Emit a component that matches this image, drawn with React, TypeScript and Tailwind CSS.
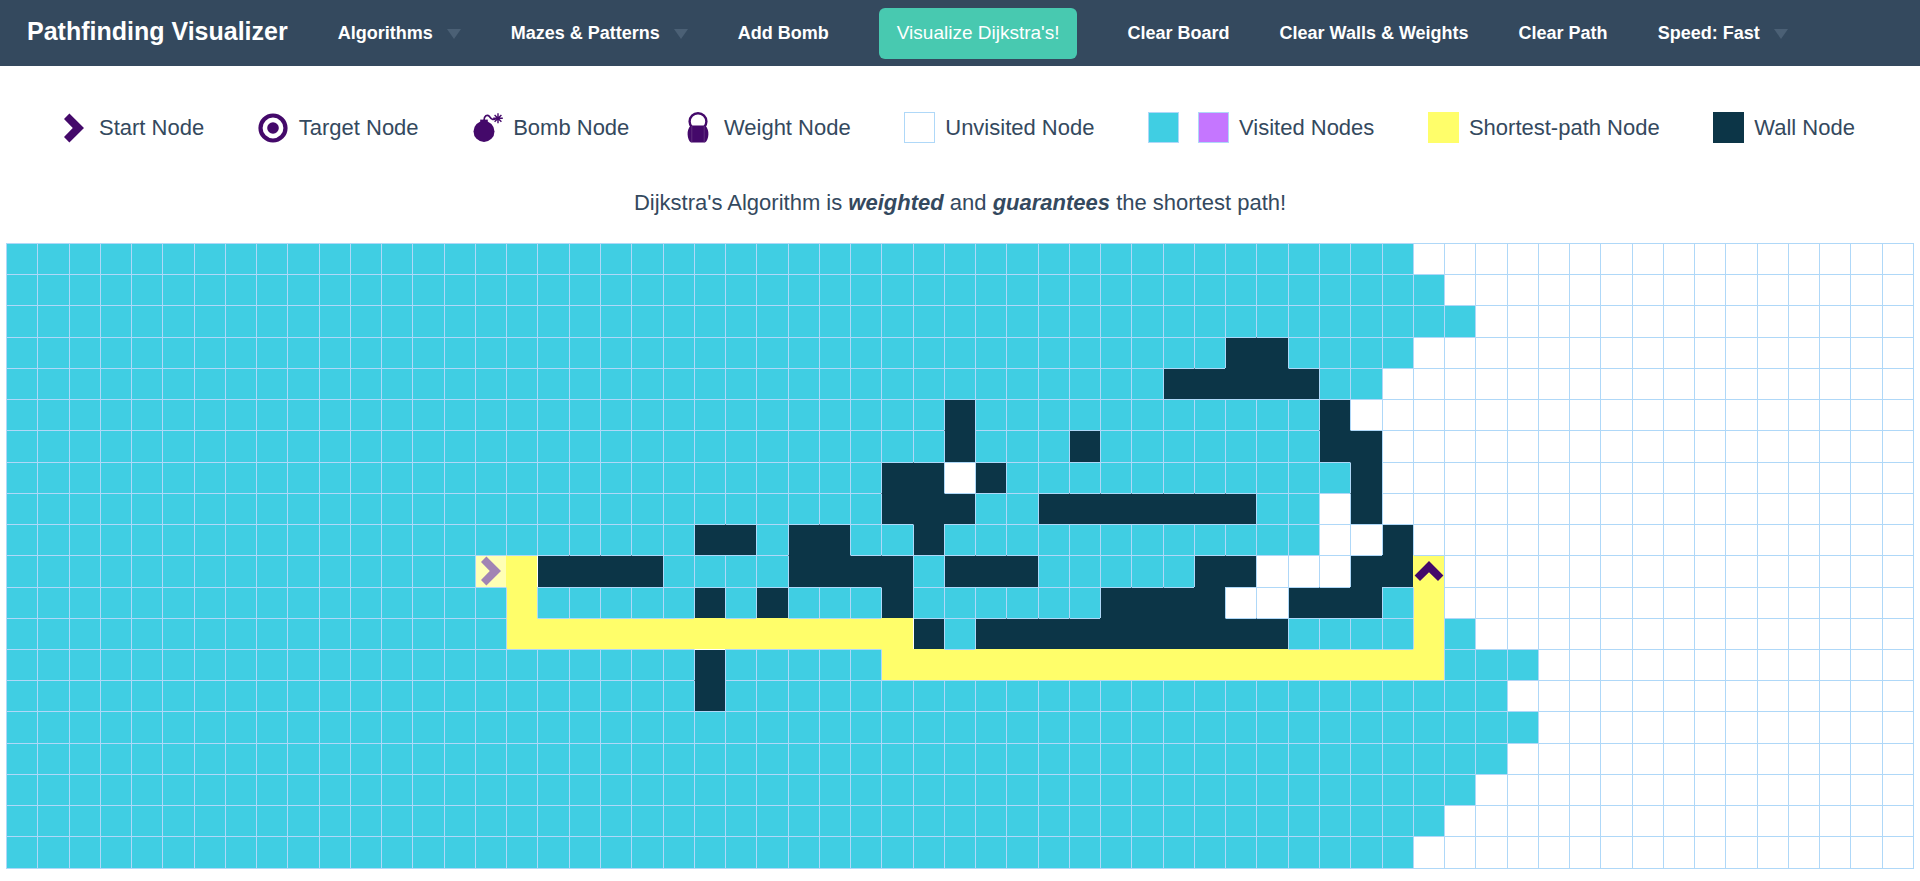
import React from "react";

type Kind = "u" | "v" | "w" | "p" | "s" | "t";

// Run-length rows: u unvisited, v visited, w wall, p path, s start, t target
const BOARD: string[] = [
  "v45 u16",
  "v46 u15",
  "v47 u14",
  "v39 w2 v4 u16",
  "v37 w5 v2 u17",
  "v30 w1 v11 w1 u18",
  "v30 w1 v3 w1 v7 w2 u17",
  "v28 w2 u1 w1 v11 w1 u17",
  "v28 w3 v2 w7 v2 u1 w1 u17",
  "v22 w2 v1 w2 v2 w1 v12 u2 w1 u16",
  "v15 s1 p1 w4 v4 w4 v1 w3 v5 w2 u3 w2 t1 u15",
  "v16 p1 v5 w1 v1 w1 v3 w1 v6 w4 u2 w3 v1 p1 u15",
  "v16 p13 w1 v1 w10 v4 p1 v1 u14",
  "v22 w1 v5 p18 v3 u12",
  "v22 w1 v25 u13",
  "v49 u12",
  "v48 u13",
  "v47 u14",
  "v46 u15",
  "v45 u16",
];

const cells: Kind[][] = BOARD.map((row) =>
  row.split(" ").flatMap((run) => Array<Kind>(Number(run.slice(1))).fill(run[0] as Kind)),
);

const FILL: Record<Kind, string> = {
  u: "bg-white",
  v: "bg-[#40cee3]",
  w: "bg-[#0c3547]",
  p: "bg-[#fffe6a]",
  s: "bg-[#ffffb5]",
  t: "bg-[#fffe6a]",
};

const onPath = (k?: Kind) => k === "p" || k === "s" || k === "t";

function leftEdge(prev: Kind | undefined, cur: Kind): string {
  if (prev === "w" && cur === "w") return "border-l-[#0c3547]";
  if (onPath(cur) && (onPath(prev) || prev === "w")) return "border-l-[#fffe6a]";
  if (prev === "p" && cur === "w") return "border-l-white";
  return "border-l-[#afd8f8]";
}

function topEdge(prev: Kind | undefined, cur: Kind): string {
  if (prev === "w" && cur === "w") return "border-t-[#0c3547]";
  if (onPath(cur) && (onPath(prev) || prev === "w")) return "border-t-[#fffe6a]";
  if (prev === "p" && cur === "w") return "border-t-white";
  return "border-t-[#afd8f8]";
}

function Chevron({ className = "" }: { className?: string }) {
  return (
    <svg viewBox="0 0 20 30" className={`h-[30px] w-[20px] shrink-0 ${className}`} aria-hidden="true">
      <path d="M0 6 L5.4 0.6 L20 15 L5.4 29.4 L0 24 L8.8 15 Z" fill="currentColor" />
    </svg>
  );
}

function TargetIcon() {
  return (
    <svg viewBox="0 0 30 30" className="size-[30px]" aria-hidden="true">
      <circle cx="15" cy="15" r="12.5" fill="none" stroke="currentColor" strokeWidth="4.2" />
      <circle cx="15" cy="15" r="5.8" fill="currentColor" />
    </svg>
  );
}

function BombIcon() {
  return (
    <svg viewBox="0 0 30 30" className="size-[30px]" aria-hidden="true">
      <circle cx="11" cy="18.4" r="10.5" fill="currentColor" />
      <path d="M7.2 10V6.6h7.6V10Z" fill="currentColor" />
      <path d="M11 7.5C11 2.6 14.2 1.2 16.4 3.4C18.6 6.4 19.6 7.4 23.5 5.4" fill="none" stroke="currentColor" strokeWidth="1.7" />
      <path d="M25 0.3V10.3M20.2 5.3H29.8M21.6 1.9L28.4 8.7M28.4 1.9L21.6 8.7" stroke="currentColor" strokeWidth="1.4" />
    </svg>
  );
}

function WeightIcon() {
  return (
    <svg viewBox="0 0 22 31" className="h-[31px] w-[22px]" aria-hidden="true">
      <circle cx="11" cy="9.6" r="8.4" fill="none" stroke="currentColor" strokeWidth="2.4" />
      <path d="M3.6 13.4H18.4C20.6 16 21.6 19 21.4 22.5C21.2 26 20.2 29 18 30.6H4C1.8 29 0.8 26 0.6 22.5C0.4 19 1.4 16 3.6 13.4Z" fill="currentColor" />
      <path d="M4.8 14V30.6M17.2 14V30.6" stroke="#8d69a0" strokeWidth="0.4" />
    </svg>
  );
}

function NavItem({ label, menu = false }: { label: string; menu?: boolean }) {
  return (
    <button type="button" className="flex items-center gap-3.5 font-bold whitespace-nowrap text-white">
      {label}
      {menu && (
        <svg viewBox="0 0 14 10" className="h-2.5 w-3.5 text-[#4b6075]" aria-hidden="true">
          <path d="M0 0H14L7 10Z" fill="currentColor" />
        </svg>
      )}
    </button>
  );
}

function Swatch({ className }: { className: string }) {
  return <span className={`size-[31px] border ${className}`} />;
}

function IconBox({ children }: { children: React.ReactNode }) {
  return <span className="flex size-[31px] items-center justify-center text-[#44096a]">{children}</span>;
}

function LegendItem({ label, children }: { label: string; children: React.ReactNode }) {
  return (
    <li className="flex items-center gap-2.5 whitespace-nowrap">
      {children}
      <span>{label}</span>
    </li>
  );
}

export default function App() {
  return (
    <div className="bg-white font-['Liberation_Sans',Arial,sans-serif] text-[#34495e]">
      <nav className="flex h-[66px] items-center gap-[50px] bg-[#34495e] px-[27px] pt-px text-[18px]">
        <a href="#" className="pb-[3px] text-[25px] font-bold whitespace-nowrap text-white">
          Pathfinding Visualizer
        </a>
        <NavItem label="Algorithms" menu />
        <NavItem label="Mazes & Patterns" menu />
        <NavItem label="Add Bomb" />
        <button
          type="button"
          className="h-[51px] rounded-md bg-[#48c9b0] px-[18px] text-[19px] whitespace-nowrap text-white"
        >
          Visualize Dijkstra's!
        </button>
        <NavItem label="Clear Board" />
        <NavItem label="Clear Walls & Weights" />
        <NavItem label="Clear Path" />
        <NavItem label="Speed: Fast" menu />
      </nav>

      <ul className="flex justify-between pt-[46px] pr-[65px] pl-[58px] text-[22px] leading-[31px]">
        <LegendItem label="Start Node">
          <IconBox><Chevron /></IconBox>
        </LegendItem>
        <LegendItem label="Target Node">
          <IconBox><TargetIcon /></IconBox>
        </LegendItem>
        <LegendItem label="Bomb Node">
          <IconBox><BombIcon /></IconBox>
        </LegendItem>
        <LegendItem label="Weight Node">
          <IconBox><WeightIcon /></IconBox>
        </LegendItem>
        <LegendItem label="Unvisited Node">
          <Swatch className="border-[#afd8f8] bg-white" />
        </LegendItem>
        <LegendItem label="Visited Nodes">
          <span className="flex gap-[19px]">
            <Swatch className="border-[#afd8f8] bg-[#40cee3]" />
            <Swatch className="border-[#afd8f8] bg-[#c576ff]" />
          </span>
        </LegendItem>
        <LegendItem label="Shortest-path Node">
          <Swatch className="border-[#fffe6a] bg-[#fffe6a]" />
        </LegendItem>
        <LegendItem label="Wall Node">
          <Swatch className="border-[#0c3547] bg-[#0c3547]" />
        </LegendItem>
      </ul>

      <p className="pt-11 text-center text-[22px] leading-[32px]">
        Dijkstra's Algorithm is <b><i>weighted</i></b> and <b><i>guarantees</i></b> the shortest path!
      </p>

      <main className="px-1.5 pt-6 pb-3">
        <div className="grid aspect-[61/20] grid-cols-[repeat(61,minmax(0,1fr))] grid-rows-[repeat(20,minmax(0,1fr))] border-r border-b border-[#afd8f8]">
          {cells.flatMap((row, r) =>
            row.map((kind, c) => (
              <div
                key={`${r}-${c}`}
                className={`flex items-center justify-center border-t border-l ${FILL[kind]} ${leftEdge(row[c - 1], kind)} ${topEdge(cells[r - 1]?.[c], kind)}`}
              >
                {kind === "s" && <Chevron className="text-[#a184b4]" />}
                {kind === "t" && <Chevron className="-rotate-90 text-[#44096a]" />}
              </div>
            )),
          )}
        </div>
      </main>
    </div>
  );
}
